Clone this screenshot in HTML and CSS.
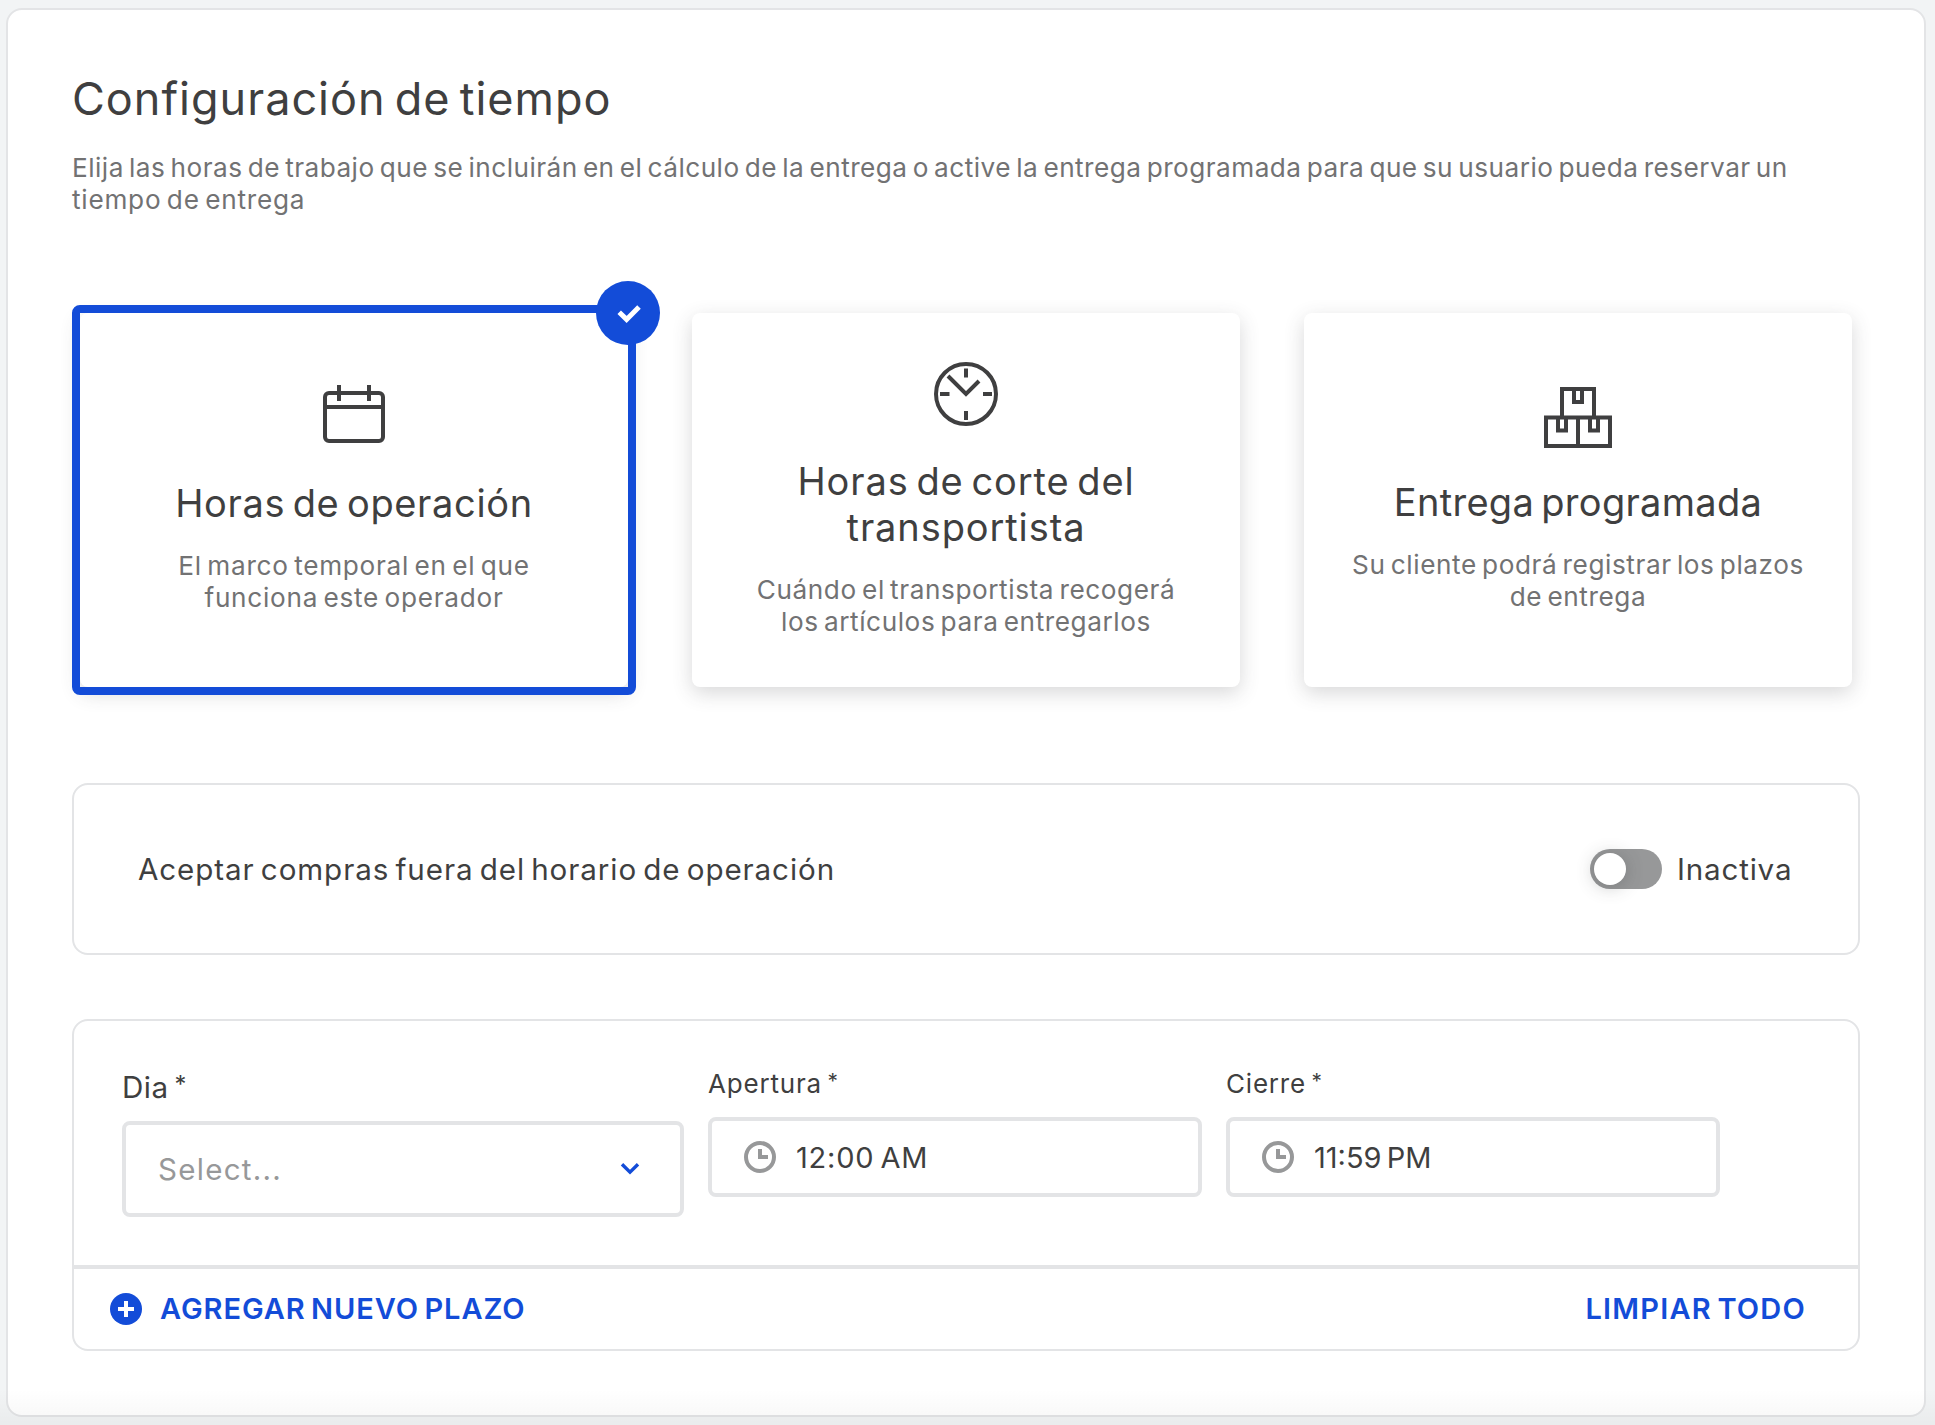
FILE: index.html
```
<!DOCTYPE html>
<html lang="es">
<head>
<meta charset="utf-8">
<title>Configuración de tiempo</title>
<link rel="stylesheet" href="styles.css">
</head>
<body>
<main class="page">
  <section class="box">
    <h1 class="title">Configuración de tiempo</h1>
    <p class="subtitle">Elija las horas de trabajo que se incluirán en el cálculo de la entrega o active la entrega programada para que su usuario pueda reservar un<br><span class="subtitle-end">tiempo de entrega</span></p>

    <div class="cards">
      <article class="card card--hours card--selected">
        <svg class="card-icon" width="62" height="58" viewBox="0 0 62 58" fill="none" stroke="#3f3f40" stroke-width="4">
          <rect x="2" y="8" width="58" height="48" rx="4"/>
          <path d="M2 22H60M16 0V16M46 0V16"/>
        </svg>
        <h2 class="card-title">Horas de operación</h2>
        <p class="card-text">El marco temporal en el que<br>funciona este operador</p>
        <span class="badge">
          <svg width="24" height="20" viewBox="0 0 24 20" fill="none" stroke="#fff" stroke-width="5"><path d="M2.2 8.2 9.6 15.4 22 3"/></svg>
        </span>
      </article>
      <article class="card card--cutoff">
        <svg class="card-icon" width="64" height="64" viewBox="0 0 64 64" fill="none" stroke="#3f3f40" stroke-width="4">
          <circle cx="32" cy="32" r="30"/>
          <path d="M32 6.5V15.5M32 49V58M6 32H15.5M49 32H58M14 14 32 32 45 19"/>
        </svg>
        <h2 class="card-title">Horas de corte del<br>transportista</h2>
        <p class="card-text">Cuándo el transportista recogerá<br>los artículos para entregarlos</p>
      </article>
      <article class="card card--scheduled">
        <svg class="card-icon" width="68" height="61" viewBox="0 0 68 61" fill="none" stroke="#3f3f40" stroke-width="4">
          <path d="M18 30.5V2H50V30.5M2 30.5H66V59H2ZM34 30.5V59"/>
          <path d="M30 2V15H38V2M14 30.5V43.5H22V30.5M46 30.5V43.5H54V30.5"/>
        </svg>
        <h2 class="card-title">Entrega programada</h2>
        <p class="card-text">Su cliente podrá registrar los plazos<br>de entrega</p>
      </article>
    </div>

    <div class="panel toggle-panel">
      <span class="toggle-question">Aceptar compras fuera del horario de operación</span>
      <div class="toggle-group">
        <span class="toggle"><span class="knob"></span></span>
        <span class="toggle-state">Inactiva</span>
      </div>
    </div>

    <div class="panel schedule">
      <div class="fields">
        <div class="field field--day">
          <label class="label">Dia <span class="req">*</span></label>
          <div class="select">
            <span class="placeholder">Select...</span>
            <svg width="20" height="14" viewBox="0 0 20 14" fill="none" stroke="#134cd8" stroke-width="3.4"><path d="M2 2.2 10 10.2 18 2.2"/></svg>
          </div>
        </div>
        <div class="field">
          <label class="label">Apertura <span class="req">*</span></label>
          <div class="time">
            <svg width="32" height="32" viewBox="0 0 32 32" fill="none" stroke="#979899" stroke-width="4"><circle cx="16" cy="16" r="14"/><path d="M16 8V16H24"/></svg>
            <span class="open">12:00 AM</span>
          </div>
        </div>
        <div class="field">
          <label class="label">Cierre <span class="req">*</span></label>
          <div class="time">
            <svg width="32" height="32" viewBox="0 0 32 32" fill="none" stroke="#979899" stroke-width="4"><circle cx="16" cy="16" r="14"/><path d="M16 8V16H24"/></svg>
            <span class="close">11:59 PM</span>
          </div>
        </div>
      </div>
      <div class="actions">
        <a class="action">
          <svg width="32" height="32" viewBox="0 0 32 32"><circle cx="16" cy="16" r="16" fill="#134cd8"/><path d="M16 8V24M8 16H24" stroke="#fff" stroke-width="4"/></svg>
          <span class="add">AGREGAR NUEVO PLAZO</span>
        </a>
        <a class="action clear">LIMPIAR TODO</a>
      </div>
    </div>
  </section>
</main>
</body>
</html>
```
FILE: styles.css
```
* {
  box-sizing: border-box;
  word-spacing: -0.1em;
}

body {
  margin: 0;
  background: #f2f4f5;
  color: #3f3f40;
  font-family: Inter, "Open Sans", sans-serif;
}

h1, h2, p { margin: 0; font-weight: 400; }
svg { display: block; flex: none; }

.page {
  position: relative;
  height: 1425px;
  padding: 8px 9px 8px 6px;
  overflow: hidden;
}

.page::after {
  content: "";
  position: absolute;
  left: 0;
  right: 0;
  bottom: 0;
  height: 36px;
  background: linear-gradient(rgba(0, 0, 0, 0), rgba(0, 0, 0, 0.035));
}

.box {
  height: 1409px;
  padding: 61px 64px 64px;
  border: 2px solid #e3e4e6;
  border-radius: 16px;
  background: #fff;
}

.title {
  font-size: 45px;
  line-height: 56px;
  letter-spacing: 1px;
}

.subtitle {
  margin-top: 25px;
  color: #727273;
  font-size: 26.2px;
  line-height: 32px;
  letter-spacing: 0.47px;
  white-space: nowrap;
}
.subtitle-end { letter-spacing: 0.75px; }

.cards {
  display: grid;
  grid-template-columns: repeat(3, 548px);
  gap: 64px;
  margin-top: 97px;
  padding: 0 8px;
}

.card {
  position: relative;
  display: flex;
  flex-direction: column;
  align-items: center;
  height: 374px;
  border-radius: 8px;
  background: #fff;
  box-shadow: 0 6px 20px rgba(61, 62, 64, 0.2);
  text-align: center;
  white-space: nowrap;
}

.card--hours { padding-top: 72px; }
.card--cutoff { padding-top: 49px; }
.card--scheduled { padding-top: 74px; }

.card--selected::before {
  content: "";
  position: absolute;
  inset: -8px;
  border: 8px solid #134cd8;
  border-radius: 8px;
}

.card-title {
  margin-top: 32px;
  font-size: 38px;
  line-height: 46px;
  letter-spacing: 0.9px;
}
.card--hours .card-title { margin-top: 37px; letter-spacing: 0.65px; }
.card--scheduled .card-title { margin-top: 31px; letter-spacing: 0.3px; }

.card-text {
  margin-top: 24px;
  color: #727273;
  font-size: 26.2px;
  line-height: 32px;
  letter-spacing: 0.57px;
}
.card--hours .card-text { letter-spacing: 0.72px; }

.badge {
  position: absolute;
  top: -32px;
  right: -32px;
  display: flex;
  align-items: center;
  justify-content: center;
  width: 64px;
  height: 64px;
  padding: 2px 0 0 2px;
  border-radius: 50%;
  background: #134cd8;
}

.panel {
  border: 2px solid #e3e4e6;
  border-radius: 16px;
}

.toggle-panel {
  display: flex;
  align-items: center;
  justify-content: space-between;
  height: 172px;
  margin-top: 96px;
  padding: 0 64px;
  font-size: 29.6px;
  line-height: 40px;
}
.toggle-question { letter-spacing: 0.9px; }
.toggle-group { display: flex; align-items: center; gap: 15px; }
.toggle-state { width: 117px; letter-spacing: 0.8px; }

.toggle {
  display: flex;
  width: 72px;
  height: 40px;
  padding: 4px;
  border-radius: 20px;
  background: #979899;
}
.knob {
  width: 32px;
  height: 32px;
  border-radius: 50%;
  background: #fff;
  box-shadow: 0 2px 18px rgba(61, 62, 64, 0.3);
}

.schedule { height: 332px; margin-top: 64px; }

.fields {
  display: flex;
  align-items: flex-start;
  gap: 24px;
  height: 248px;
  padding: 45px 48px 0;
  border-bottom: 4px solid #e3e4e6;
}

.field { width: 494px; }
.field--day { width: 562px; }

.label {
  display: block;
  margin-bottom: 15px;
  font-size: 26px;
  line-height: 36px;
  letter-spacing: 0.8px;
}
.field--day .label {
  padding-top: 1px;
  margin-bottom: 14px;
  font-size: 29.6px;
  line-height: 40px;
  letter-spacing: 0.5px;
}
.req {
  font-size: 0.8em;
  line-height: 0;
  vertical-align: 0.2em;
}

.select, .time {
  display: flex;
  align-items: center;
  border: 4px solid #e3e4e6;
  border-radius: 8px;
}
.select {
  justify-content: space-between;
  height: 96px;
  padding: 0 40px 0 32px;
  color: #979899;
  font-size: 29.6px;
}
.placeholder { letter-spacing: 1.25px; }
.time {
  gap: 20px;
  height: 80px;
  padding: 0 32px;
  font-size: 29px;
}
.open { letter-spacing: 0.8px; }
.close { letter-spacing: 0; }

.actions {
  display: flex;
  align-items: center;
  justify-content: space-between;
  height: 80px;
  padding: 0 52px 1px 36px;
  color: #134cd8;
  font-size: 29px;
  font-weight: 600;
}
.action { display: flex; align-items: center; gap: 18px; }
.add { letter-spacing: 0.95px; }
.clear { letter-spacing: 1.2px; }
```
